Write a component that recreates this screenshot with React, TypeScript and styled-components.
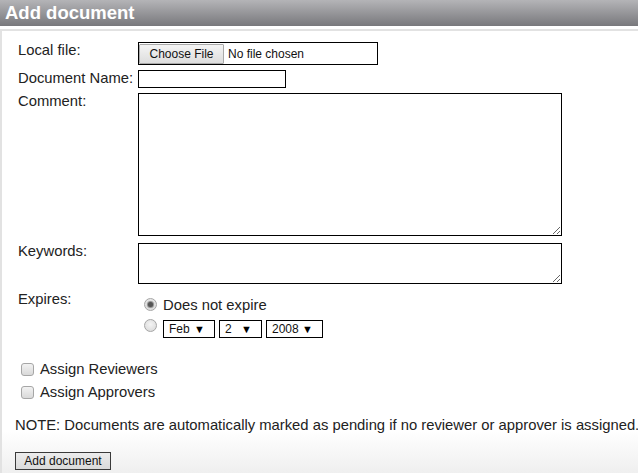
import styled, { createGlobalStyle } from 'styled-components';

const GlobalStyle = createGlobalStyle`
  body {
    margin: 0;
    background: #fff;
    font-family: "Liberation Sans", Arial, sans-serif;
    font-size: 14.8px;
    color: #222;
  }
`;

const dateParts = [
  { value: 'Feb', width: 52 },
  { value: '2', width: 43 },
  { value: '2008', width: 57 },
];

function App() {
  return (
    <>
      <GlobalStyle />
      <Header>Add document</Header>
      <Panel>
        <FormGrid>
          <Label>Local file:</Label>
          <FileBox>
            <ChooseButton type="button">Choose File</ChooseButton>
            <FileText>No file chosen</FileText>
          </FileBox>

          <Label>Document Name:</Label>
          <TextInput />

          <Label>Comment:</Label>
          <TextArea $height={143} />

          <Label>Keywords:</Label>
          <TextArea $height={41} />

          <Label>Expires:</Label>
          <RadioGroup>
            <RadioRow>
              <Radio $checked />
              <span>Does not expire</span>
            </RadioRow>
            <RadioRow>
              <Radio />
              <Selects>
                {dateParts.map((part) => (
                  <SelectBox key={part.value} $width={part.width}>
                    <span>{part.value}</span>
                    <Arrow>▼</Arrow>
                  </SelectBox>
                ))}
              </Selects>
            </RadioRow>
          </RadioGroup>
        </FormGrid>

        <Checks>
          <CheckRow>
            <CheckBox />
            <span>Assign Reviewers</span>
          </CheckRow>
          <CheckRow>
            <CheckBox />
            <span>Assign Approvers</span>
          </CheckRow>
        </Checks>

        <Note>NOTE: Documents are automatically marked as pending if no reviewer or approver is assigned.</Note>

        <SubmitButton type="button">Add document</SubmitButton>
      </Panel>
    </>
  );
}

export default App;

const Header = styled.div`
  height: 26px;
  line-height: 26px;
  padding-left: 5px;
  font-size: 18.5px;
  font-weight: bold;
  color: #fff;
  background: linear-gradient(to bottom, #b4b4b7, #78787c);
`;

const Panel = styled.div`
  margin-top: 3px;
  border-top: 2px solid #e2e2e2;
  border-left: 2px solid #e2e2e2;
  padding: 11px 0 3px 13px;
  min-height: 427px;
  box-sizing: border-box;
  display: flex;
  flex-direction: column;
  align-items: flex-start;
  background: linear-gradient(to bottom, #fff 0, #fff 400px, #efefef 100%);
`;

const FormGrid = styled.div`
  display: grid;
  grid-template-columns: 120px auto;
  row-gap: 5px;
  padding-left: 3px;
  align-items: start;
`;

const Label = styled.div`
  line-height: 17px;
  color: #222;
`;

const FileBox = styled.div`
  width: 240px;
  height: 23px;
  box-sizing: border-box;
  border: 1px solid #000;
  display: flex;
  align-items: center;
  font-size: 12px;
`;

const ChooseButton = styled.button`
  height: 20px;
  width: 85px;
  padding: 0;
  border: 1px solid #a9a9a9;
  border-radius: 1px;
  background: linear-gradient(to bottom, #f4f4f4, #dddddd);
  font-family: "Liberation Sans", Arial, sans-serif;
  font-size: 12px;
  color: #111;
`;

const FileText = styled.span`
  margin-left: 4px;
  color: #111;
`;

const TextInput = styled.input`
  width: 148px;
  height: 18px;
  box-sizing: border-box;
  border: 1px solid #000;
  margin: 0;
  padding: 0 2px;
  display: block;
`;

const TextArea = styled.textarea<{ $height: number }>`
  display: block;
  width: 424px;
  height: ${(p) => p.$height}px;
  box-sizing: border-box;
  border: 1px solid #000;
  margin: 0 0 2px 0;
  padding: 2px;
  resize: both;
`;

const RadioGroup = styled.div`
  margin-top: 5px;
  padding-left: 6px;
  display: flex;
  flex-direction: column;
  gap: 3px;
`;

const RadioRow = styled.div`
  display: flex;
  align-items: flex-start;
  gap: 6px;
  line-height: 18px;
`;

const Radio = styled.span<{ $checked?: boolean }>`
  width: 13px;
  height: 13px;
  margin-top: 2px;
  box-sizing: border-box;
  border-radius: 50%;
  border: 1px solid #a6a6a6;
  background: radial-gradient(circle at 50% 40%, #f4f4f4, #d6d6d6);
  position: relative;
  display: inline-block;
  flex-shrink: 0;
  &::after {
    content: '';
    display: ${(p) => (p.$checked ? 'block' : 'none')};
    position: absolute;
    left: 3px;
    top: 3px;
    width: 5px;
    height: 5px;
    border-radius: 50%;
    background: #555;
    box-shadow: 0 0 1px 1px #888;
  }
`;

const Selects = styled.div`
  display: flex;
  gap: 4px;
  margin-top: 3px;
`;

const SelectBox = styled.div<{ $width: number }>`
  width: ${(p) => p.$width}px;
  height: 18px;
  box-sizing: border-box;
  border: 1px solid #000;
  display: flex;
  justify-content: space-between;
  align-items: center;
  padding: 0 9px 0 5px;
  font-size: 12px;
  color: #111;
`;

const Arrow = styled.span`
  font-size: 11px;
  color: #000;
`;

const Checks = styled.div`
  margin-top: 22px;
  padding-left: 6px;
  display: flex;
  flex-direction: column;
  gap: 5px;
`;

const CheckRow = styled.div`
  display: flex;
  align-items: center;
  gap: 6px;
  line-height: 18px;
`;

const CheckBox = styled.span`
  width: 13px;
  height: 13px;
  box-sizing: border-box;
  border: 1px solid #a6a6a6;
  border-radius: 3px;
  background: linear-gradient(to bottom, #f2f2f2, #d9d9d9);
  display: inline-block;
`;

const Note = styled.div`
  margin-top: 16px;
  line-height: 17px;
  white-space: nowrap;
`;

const SubmitButton = styled.button`
  margin-top: 18px;
  height: 18px;
  width: 96px;
  padding: 0;
  border: 1px solid #3a3a3a;
  background: linear-gradient(to bottom, #ececec, #dadada);
  font-family: "Liberation Sans", Arial, sans-serif;
  font-size: 12px;
  color: #111;
`;
